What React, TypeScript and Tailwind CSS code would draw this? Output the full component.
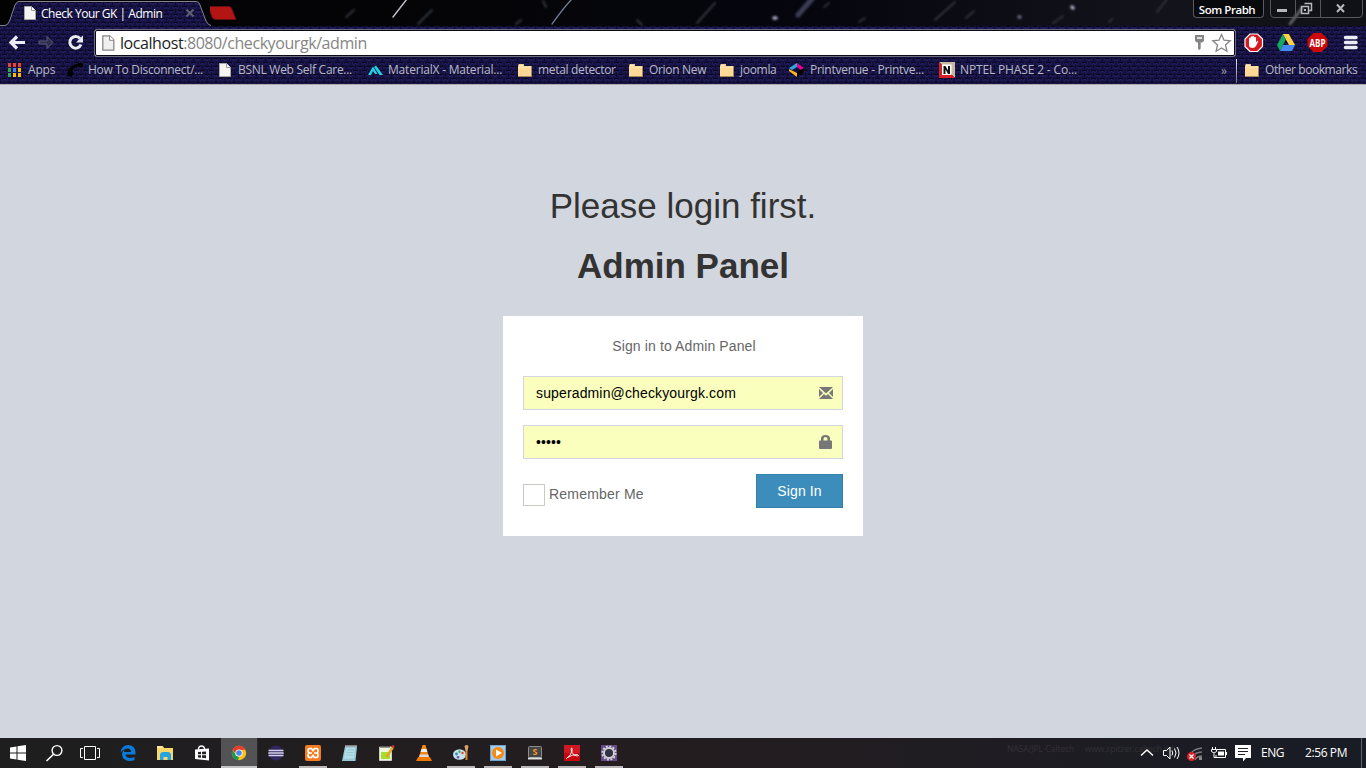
import React from 'react';

const UI = "font-['Open_Sans','Noto_Sans',sans-serif]";

function Weave() {
  return (
    <svg className="absolute inset-0 h-full w-full" aria-hidden="true">
      <defs>
        <pattern id="weave" width="9" height="8" patternUnits="userSpaceOnUse" y="1">
          <rect width="9" height="8" fill="#15113f" />
          <path d="M0 1.5h2M7 1.5h2M2.5 5.5h4" stroke="#090819" strokeWidth="1.1" />
          <path d="M0 3.5l2-1M7 2.5l2 1M2.5 7.5l2-1 2 1" stroke="#29246e" strokeWidth="1" fill="none" />
          <path d="M3 2v2M6 2v2M1.5 5.5v2M7.5 5.5v2" stroke="#1f1a5a" strokeWidth="1" />
          <path d="M4.5 1v3M0 5v2" stroke="#0d0b2b" strokeWidth="1" />
        </pattern>
      </defs>
      <rect width="100%" height="100%" fill="url(#weave)" />
    </svg>
  );
}

function Meteors() {
  return (
    <svg className="absolute inset-0" width="1366" height="26" viewBox="0 0 1366 26" aria-hidden="true">
      <defs>
        <linearGradient id="sky">
          <stop offset="0" stopColor="#020203" />
          <stop offset=".35" stopColor="#050508" />
          <stop offset=".6" stopColor="#05060e" />
          <stop offset=".85" stopColor="#13141b" />
          <stop offset="1" stopColor="#101116" />
        </linearGradient>
        <filter id="soft" x="-5%" y="-50%" width="110%" height="200%">
          <feGaussianBlur stdDeviation="1" />
        </filter>
      </defs>
      <rect width="1366" height="26" fill="url(#sky)" />
      <g strokeLinecap="round" fill="none">
        <path d="M393 17L407-1" stroke="#bdbbc4" strokeWidth="1.500" />
        <path d="M552 24C560 13 565 6 572-1" stroke="#76829a" strokeWidth="1.300" />
      </g>
      <g strokeLinecap="round" fill="none" filter="url(#soft)">
        <path d="M346 17l8-7M418 24l14-14M516 24l5-4M543 1l3 6M697 23l18-20M637 20l5 5" stroke="#33343e" strokeWidth="2" />
        <path d="M798 15L812-1" stroke="#3a3d52" strokeWidth="5" />
        <path d="M824 7l5-4M859 22l6-4M966 18l8-7M1053 23l10-7M935 20l20-18M1109 22l3-3M1157 12l10-13" stroke="#30323c" strokeWidth="2" />
        <path d="M1290 24l12-16" stroke="#6b6e76" strokeWidth="2.500" />
        <path d="M774 18h2M1072 7l1 1" stroke="#a5aac4" strokeWidth="3.500" />
        <path d="M1019 17h1" stroke="#666b80" strokeWidth="3.500" />
      </g>
    </svg>
  );
}

function PageIcon({ className = '' }: { className?: string }) {
  return (
    <svg className={className} width="12" height="14" viewBox="0 0 12 14">
      <path d="M.5.5h7l4 4v9H.5z" fill="#f4f4f4" stroke="#a7a7a7" />
      <path d="M7.500.500v4h4" fill="#fff" stroke="#999" />
    </svg>
  );
}

function Folder() {
  return (
    <svg width="16" height="16" viewBox="0 0 16 16">
      <path d="M1 3.500q0-1.500 1-1.500h5v2h8v10.500H1z" fill="#e0a95c" />
      <path d="M2 2.500h4.500v1.500H2z" fill="#fff3d0" />
      <path d="M1 4.500h13V14H1z" fill="#ffd995" />
      <path d="M1 5h13" stroke="#ffefc4" />
      <path d="M14.500 4.500v10H1" stroke="#a3875c" fill="none" />
    </svg>
  );
}

function AppsIcon() {
  const dots = ['#ea4335', '#ea4335', '#ea4335', '#34a853', '#4285f4', '#fbbc05', '#34a853', '#fbbc05', '#fbbc05'];
  return (
    <svg width="14" height="14" viewBox="0 0 14 14">
      {dots.map((c, i) => (
        <rect key={i} x={(i % 3) * 5} y={Math.floor(i / 3) * 5} width="3" height="4" fill={c} />
      ))}
    </svg>
  );
}

function PhoneIcon() {
  return (
    <svg width="16" height="16" viewBox="0 0 16 16">
      <path d="M1 14q-2-5 3-9 5-4 10-4l2 1-1 4-4-1v-1Q6 6 5 10l2 1-2 4z" fill="#000" />
    </svg>
  );
}

function PrintIcon() {
  return (
    <svg width="16" height="16" viewBox="0 0 16 16">
      <path d="M0 6l8-5v4L3 8z" fill="#29a9e0" />
      <path d="M8 1l7 5-3 2-4-3z" fill="#ec008c" />
      <path d="M0 7l8 4v4L0 9z" fill="#ffb51b" />
      <path d="M8 10l7-4v4l-7 5z" fill="#050505" />
    </svg>
  );
}

const bookmarks: { icon: React.ReactNode; label: string; box: string; text: string }[] = [
  { icon: <AppsIcon />, label: 'Apps', box: 'w-[59px]', text: 'tracking-[-0.2px]' },
  { icon: <PhoneIcon />, label: 'How To Disconnect/...', box: 'w-[152px]', text: 'tracking-[-0.3px] pl-px' },
  { icon: <PageIcon />, label: 'BSNL Web Self Care...', box: 'w-[149px]', text: '-ml-px tracking-[-0.28px]' },
  {
    icon: (
      <svg width="15" height="16" viewBox="0 0 15 16">
        <path d="M0 13L5 4.500 9.500 12H7L5 9l-2 4zM6 5l2-1.500L15 13h-3.500z" fill="#20d0e4" />
      </svg>
    ),
    label: 'MaterialX - Material...',
    box: 'w-[149px]',
    text: 'tracking-[-0.2px]',
  },
  { icon: <Folder />, label: 'metal detector', box: 'w-[111px]', text: 'tracking-[-0.32px] pl-px' },
  { icon: <Folder />, label: 'Orion New', box: 'w-[91px]', text: 'tracking-[-0.32px] pl-px' },
  { icon: <Folder />, label: 'joomla', box: 'w-[70px]', text: 'tracking-[-0.3px] pl-px' },
  { icon: <PrintIcon />, label: 'Printvenue - Printve...', box: 'w-[150px]', text: 'tracking-[-0.27px] pl-px' },
  {
    icon: (
      <svg width="16" height="16" viewBox="0 0 16 16">
        <path d="M0 0h16v16z" fill="#c9b8a1" />
        <path d="M0 0v16h16z" fill="#d51f28" />
        <path d="M3 2.500h9.500v10.500H3z" fill="#fff" />
        <path d="M4.500 12V4h2l2.500 4.500V4h2v8H9L6.500 7.500V12z" fill="#111" />
      </svg>
    ),
    label: 'NPTEL PHASE 2 - Co...',
    box: 'w-[150px]',
    text: 'tracking-[-0.15px] pl-px',
  },
];

function TabStrip() {
  return (
    <div className="relative flex h-[25px] w-full">
      <Meteors />
      <div className="relative h-[26px] w-[210px] shrink-0">
        <svg className="absolute inset-0" width="212" height="26" viewBox="0 0 212 26">
          <path d="M0 26V25.500H5Q8 25 9.500 21L15 5q1.500-3.500 4-3.500h177q3 0 4 3.500l6 16q2 4 5 4.500V26z" fill="url(#weave)" />
          <path d="M0 25.500H5Q8 25 9.500 21L15 5q1.500-3.500 4-3.500h177q3 0 4 3.500l6 16q2 4 5 4.500" fill="none" stroke="#85848f" />
        </svg>
        <div className="relative flex h-[26px] items-center pl-6">
          <PageIcon className="mr-[5px]" />
          <span className="w-[145px] pt-px text-[12px] leading-none tracking-[-0.48px] text-white">Check Your GK | Admin</span>
          <svg width="8" height="8" viewBox="0 0 8 8">
            <path d="M.5.500l7 7M7.500.500l-7 7" stroke="#605f74" strokeWidth="2" />
          </svg>
        </div>
      </div>
      <svg className="relative shrink-0" width="30" height="25" viewBox="0 0 30 25">
        <path d="M0 6.500h21q2 0 3 2.500l4 10.500H8q-3 0-4-2.500z" transform="translate(-2)" fill="#b31414" stroke="#651013" />
      </svg>
      <div className="relative ml-auto mr-[3px] flex">
        <div className="mr-[6px] flex h-[18px] w-[71px] items-center justify-center rounded-b border border-t-0 border-[#595b60] bg-[#08090d] pr-[3px] pt-[2px] text-[11.500px] font-semibold leading-none tracking-[-0.45px] text-white">
          Som Prabh
        </div>
        <svg width="93" height="19" viewBox="0 0 93 19">
          <path d="M.5 0v14q0 3.500 3.500 3.500h85q3.500 0 3.500-3.500V0M25.500 0v17.500M50.500 0v17.500" fill="none" stroke="#55575c" />
          <path d="M7 9h10v3H7z" fill="#b7b8bb" />
          <path d="M34.500 3.500h7v7h-3M31.500 6.500h7v7h-7z" fill="none" stroke="#b7b8bb" strokeWidth="1.500" />
          <path d="M34 9h2v2h-2z" fill="#b7b8bb" />
          <path d="M67 4.500l7 7.500M74 4.500L67 12" stroke="#b7b8bb" strokeWidth="2" />
        </svg>
      </div>
    </div>
  );
}

function Toolbar() {
  return (
    <div className="relative flex h-[32px] items-center">
      <svg className="shrink-0" width="94" height="32" viewBox="0 0 94 32">
        <path d="M25 17.500H12M17 11.500l-6 6 6 6" fill="none" stroke="#ececf6" strokeWidth="3.200" />
        <path d="M39 16h8v-4.500l6 6-6 6V19h-8z" fill="#302e50" stroke="#5b5a76" />
        <path d="M80 13.500A5.800 5.800 0 1 0 81 19.500" fill="none" stroke="#ececf6" strokeWidth="3" />
        <path d="M83 10.500v7h-7z" fill="#ececf6" />
      </svg>
      <div className="mt-[4px] flex h-[28px] w-[1142px] shrink-0 items-center rounded-[3px] border border-[#6e6d7d] bg-white pl-[7px] pr-[2px] outline-1 -outline-offset-2 outline-[#08071c]">
        <svg width="13" height="16" viewBox="0 0 13 16">
          <path d="M.8.8h7l4 4v10.400H.8z" fill="#f0f0f0" stroke="#888" strokeWidth="1.300" />
          <path d="M7.500.800v4.500h4.500" fill="#fff" stroke="#888" />
        </svg>
        <span className="ml-[5px] whitespace-nowrap text-[16px] leading-none tracking-[-0.43px] text-[#858585]">
          <span className="text-[#222]">localhost</span>:8080/checkyourgk/admin
        </span>
        <svg className="ml-auto" width="40" height="22" viewBox="0 0 40 22">
          <path d="M2 3h9v6l-2 1.500H7.700v6L6.500 18H6l-1-1.500v-6H4L2 9z" fill="#858585" />
          <path d="M4 5h5v2H4z" fill="#ddd" />
          <path d="M28.500 2.500l2.500 5.700 6.200.600-4.700 4.200 1.400 6.200-5.400-3.300-5.400 3.300 1.400-6.200-4.700-4.200 6.200-.600z" fill="#fff" stroke="#858585" strokeWidth="1.300" />
        </svg>
      </div>
      <svg className="shrink-0" width="130" height="32" viewBox="1236 0 130 32">
        <path d="M1250 9h7.500l5 5v7.500l-5 5H1250l-5-5V14z" fill="#d81820" stroke="#fff" strokeWidth="1.200" />
        <path d="M1249 17v-3.500q1-1.500 1.500 0v-1.500q1-1.500 1.700 0v-.500q1-1.500 2 0v1q1-1 1.800 0v5l1-1.500q1-.500 1.200.500l-2.200 4.500q-1 2-3.500 2-3.500 0-3.500-3z" fill="#fff" />
        <path d="M1282.800 9h6l6.200 11h-6z" fill="#ffcf48" />
        <path d="M1282.800 9l3 5.500L1280 26l-3-6z" fill="#11a861" />
        <path d="M1283 20h12l-3 6h-12z" fill="#4688f4" />
        <path d="M1313.500 8h8l6 6v7l-6 6h-8l-6-6v-7z" fill="#cc0909" />
        <text x="1317.500" y="21.500" textAnchor="middle" fill="#fff" fontSize="10.500" fontWeight="700" textLength="16" lengthAdjust="spacingAndGlyphs">ABP</text>
        <path d="M1345.500 12.500h10.500M1345.500 17.500h10.500M1345.500 22.500h10.500" stroke="#ececf4" strokeWidth="3.500" strokeLinecap="round" />
      </svg>
    </div>
  );
}

function BookmarkBar() {
  return (
    <div className="relative flex h-[27px] items-center pl-2 text-[12px] leading-none text-[#b9b9c6]">
      {bookmarks.map((b) => (
        <div key={b.label} className={`flex h-[26px] shrink-0 items-center whitespace-nowrap pb-px ${b.box}`}>
          <span className="flex w-5 shrink-0 items-center">{b.icon}</span>
          <span className={b.text}>{b.label}</span>
        </div>
      ))}
      <span className="ml-auto mr-[9px] text-[12px] text-[#9c9caa]">»</span>
      <span className="h-[24px] w-px bg-linear-to-b from-[#e8e8f0] to-[#77768a]" />
      <div className="ml-[7px] flex w-[122px] items-center whitespace-nowrap pb-[2px]">
        <Folder />
        <span className="ml-[5px] tracking-[-0.42px]">Other bookmarks</span>
      </div>
    </div>
  );
}

function LoginPage() {
  return (
    <main className="flex h-[653px] flex-col items-center bg-[#d2d6de] pt-[96px] font-['Liberation_Sans',Arial,sans-serif] text-[14px] leading-5">
      <h1 className="mb-[10px] text-[35px] font-normal leading-[50px] text-[#333]">Please login first.</h1>
      <h2 className="mb-[25px] text-[35px] font-bold leading-[50px] text-[#333]">Admin Panel</h2>
      <section className="h-[220px] w-[360px] bg-white p-5 text-[#666]">
        <p className="pb-5 pl-[2px] text-center tracking-[0.12px]">Sign in to Admin Panel</p>
        <div className="mb-[15px] flex h-[34px] items-center justify-between border border-[#d2d6de] bg-[#faffbd] pl-3 pr-[9px] text-black">
          <span className="tracking-[0.14px]">superadmin@checkyourgk.com</span>
          <svg width="14" height="12" viewBox="0 0 14 12">
            <path d="M0 0h14L7 6.500zM0 2l4 4-4 4zM14 2l-4 4 4 4zM5 7l2 1.800L9 7l5 5H0z" fill="#777" />
          </svg>
        </div>
        <div className="mb-[15px] flex h-[34px] items-center justify-between border border-[#d2d6de] bg-[#faffbd] pl-3 pr-[10px] text-black">
          <span className="tracking-[0.1px]">•••••</span>
          <svg width="13" height="14" viewBox="0 0 13 14">
            <path d="M1 5.500h1V3.500Q2 0 6.500 0T11 3.500v2h1q1 0 1 1V13q0 1-1 1H1q-1 0-1-1V6.500q0-1 1-1zm3.500 0h4V4q0-2-2-2t-2 2z" fill="#777" />
          </svg>
        </div>
        <div className="flex items-start justify-between">
          <label className="mt-[10px] flex items-center">
            <span className="mr-1 h-[22px] w-[22px] border border-[#ccc9c5] bg-white" />
            <span className="-mt-[2px] tracking-[0.2px]">Remember Me</span>
          </label>
          <button className="h-[34px] w-[87px] border border-[#367fa9] bg-[#3c8dbc] tracking-[0.1px] text-white">Sign In</button>
        </div>
      </section>
    </main>
  );
}

function Chrome() {
  return (
    <svg width="16" height="16" viewBox="0 0 16 16">
      <circle cx="8" cy="8" r="7.200" fill="#fbc116" />
      <path d="M1.500 4.800A7.200 7.200 0 0 1 14.500 4.800L8 5 5 9z" fill="#e23c2d" />
      <path d="M1.500 4.800L5 10.500l3 1.500-1 3.100A7.200 7.200 0 0 1 1.500 4.800z" fill="#169c58" />
      <circle cx="8" cy="8" r="3.600" fill="#fff" />
      <circle cx="8" cy="8" r="2.800" fill="#4687ed" />
    </svg>
  );
}

const tasks: { id: string; open?: boolean; active?: boolean; icon: React.ReactNode }[] = [
  { id: 'edge', icon: <path d="M.5 7.500Q1.500 0 8.500 0 15.500.500 15.500 8v1.500H5.500q.5 3.500 5 3.500 2 0 4-1v3q-2 1-5 1-7 0-7.500-6.500Q2 6 5.500 4.200 4 5.500 4 7h7q0-3.500-3.500-3.500T.5 7.500z" fill="#0b7ad9" /> },
  { id: 'explorer', icon: <><path d="M0 1h6l1 2h9v12H0z" fill="#f9d66b" /><path d="M0 1h5v2H0z" fill="#ffe9a2" /><path d="M3 15V9l2-2h7l2 2v6h-3.500v-3h-4v3z" fill="#24a5df" /></> },
  { id: 'store', icon: <><path d="M4.500 5V3.500q.5-2.500 3-2.500t3 2.500V5" fill="none" stroke="#fff" strokeWidth="1.300" /><path d="M1 4.500l14-1v12L1 14z" fill="#fff" /><path d="M4 7l3-.200V9.300H4zm4-.300l4-.300v2.900H8zM4 10.200h3v2.500l-3-.300zm4 0h4v3l-4-.400z" fill="#222" /></> },
  { id: 'chrome', active: true, icon: <Chrome /> },
  { id: 'eclipse', icon: <><circle cx="8" cy="8" r="7.500" fill="#302761" /><path d="M.5 5.500h15M.3 8h15.400M.5 10.500h15" stroke="#d5d4ea" strokeWidth="1.300" /></> },
  { id: 'xampp', open: true, icon: <><rect width="16" height="16" rx="2" fill="#f47c20" /><path d="M7 8H5q-2 0-2-2.200T5 3.500h1.500L8 5.500l1.500-2H11q2 0 2 2.300T11 8H9M7 8H5q-2 0-2 2.200t2 2.300h1.500L8 10.500l1.500 2H11q2 0 2-2.300T11 8H9" fill="none" stroke="#fff" strokeWidth="1.700" /></> },
  { id: 'notepad', icon: <><path d="M3 1.500h12L13.500 16H0z" fill="#9ac9d6" /><path d="M4 3h9l-1 10.500H2z" fill="#b5dde6" /><path d="M5 5h7M4.500 7.500h7M4 10h7" stroke="#94c9d5" /><path d="M3.500 1h11" stroke="#e1e1e1" strokeWidth="2" strokeDasharray="1 1" /></> },
  { id: 'notepadpp', icon: <><path d="M.5 2h12v13.500H.5z" fill="#eef6dc" stroke="#ccc" /><path d="M2 7h9v7H2z" fill="#a7dc30" /><path d="M1.500 2h10" stroke="#444" strokeWidth="2" strokeDasharray="1 1" /><path d="M7.500 12L14 2" stroke="#e3a527" strokeWidth="2.500" /><path d="M13 2l2-1.500" stroke="#c92a25" strokeWidth="2.500" /></> },
  { id: 'vlc', icon: <><path d="M6.500 0h3L13 12H3z" fill="#f28516" /><path d="M5.500 4h5l.800 3H4.700z" fill="#eee" /><path d="M3.800 9.500h8.400l.600 2.500H3.200z" fill="#ddd" /><path d="M2 12h12l2 4H0z" fill="#ef7900" /></> },
  { id: 'paint', open: true, icon: <><ellipse cx="6.500" cy="9.500" rx="6.500" ry="5.300" fill="#c4e2ef" /><circle cx="3.500" cy="9" r="1.400" fill="#2f89bd" /><circle cx="6.500" cy="6.700" r="1.200" fill="#4da845" /><circle cx="9.500" cy="8" r="1.200" fill="#e54832" /><circle cx="5" cy="12.200" r="1.300" fill="#704c9d" /><path d="M13.500 6v9" stroke="#d88428" strokeWidth="2" /><path d="M11.500 1q2-2 4 0l-1 5h-2z" fill="#d6a267" /></> },
  { id: 'player', open: true, icon: <><rect x=".5" y=".5" width="15" height="15" fill="#a7cbe6" stroke="#6ba6d2" /><circle cx="8" cy="8" r="6" fill="#f58a14" /><path d="M6 4.500l6 3.500-6 3.500z" fill="#fff" /></> },
  { id: 'sublime', open: true, icon: <><rect x="1.500" y="1.500" width="13" height="11" rx="1" fill="#454545" stroke="#8c8c8c" /><path d="M1 12.500h14v2H1z" fill="#ddd" /><text x="8" y="10" textAnchor="middle" fill="#f29b27" fontSize="9" fontWeight="700">S</text></> },
  { id: 'pdf', open: true, icon: <><path d="M0 0h16v16H0z" fill="#c5080f" /><path d="M0 0h16v8H0z" fill="#d01820" /><path d="M2.500 13.500Q7 10.500 8 6 8.500 2.500 7.500 3T8 7.500q2 3.500 5 3.500t.5-1.500Q8 9.500 3.500 12.500z" fill="none" stroke="#fff" strokeWidth=".9" /></> },
  { id: 'gear', open: true, icon: <><path d="M0 0h16v16H0z" fill="#644b86" /><circle cx="8" cy="8" r="6.600" fill="none" stroke="#d2d1d5" strokeWidth="2" strokeDasharray="2 1.460" /><circle cx="8" cy="8" r="5" fill="#343044" stroke="#cfced2" strokeWidth="2" /></> },
];

function Taskbar() {
  return (
    <footer className="flex h-[30px] items-stretch bg-linear-to-r from-[#1e1e1f] via-[#241d20] to-[#181c25] text-white">
      <svg className="shrink-0" width="109" height="30" viewBox="0 0 109 30">
        <path d="M10 9.500L16.500 8.500V14.500H10zM17.500 8.300L26 7V14.500H17.500zM10 15.500h6.500v6L10 20.500zM17.500 15.500H26V23L17.500 21.700z" fill="#fff" />
        <circle cx="57" cy="12.500" r="4.900" fill="none" stroke="#fff" strokeWidth="1.400" />
        <path d="M53.500 16.200L46.500 23" stroke="#fff" strokeWidth="1.600" />
        <path d="M84.500 8.500h11v13h-11zM83 10.500h-2.500v9H83M97 10.500h2.500v9H97" fill="none" stroke="#fff" />
      </svg>
      {tasks.map((t) => (
        <div key={t.id} className={`flex w-[37px] shrink-0 flex-col items-center ${t.active ? 'translate-x-px border-r border-[#2a282a] bg-[#535254]' : ''}`}>
          <svg className="mt-[7px]" width="16" height="16" viewBox="0 0 16 16">{t.icon}</svg>
          {t.open && <span className="mt-auto h-[2px] w-7 bg-[#b9b7b8]" />}
          {t.active && <span className="mt-auto h-[2px] w-full bg-[#c5c4c5]" />}
        </div>
      ))}
      <div className="ml-auto flex items-center whitespace-nowrap">
        <span className="-mr-[46px] mt-[-8px] w-[179px] text-[8.500px] tracking-[-0.1px] text-[#343135]">NASA/JPL-Caltech &nbsp; &nbsp; www.spitzer.caltech.edu</span>
        <svg className="shrink-0" width="114" height="30" viewBox="1140 0 114 30">
          <path d="M1141 17.500l6-5.500 6 5.500" fill="none" stroke="#fff" strokeWidth="1.400" />
          <path d="M1163.500 12.500h3l3.500-3.500v12l-3.500-3.500h-3z" fill="none" stroke="#fff" />
          <path d="M1172 12.500q1.500 2.500 0 5M1174.500 10.500q3 4.500 0 9M1177 9q4 6 0 12" fill="none" stroke="#fff" />
          <path d="M1188 20q3-9 14-10M1191 21q3-7 11-7M1195 22q2-4 7-4" fill="none" stroke="#77797d" strokeWidth="1.400" />
          <path d="M1199 19h3v3h-3z" fill="#888" />
          <circle cx="1191.500" cy="18.500" r="4.500" fill="#d9232c" />
          <path d="M1189.500 16.500l4 4M1193.500 16.500l-4 4" stroke="#fff" strokeWidth="1.200" />
          <path d="M1216.500 11.500h9v8h-9.500V17M1226.500 14v3M1212.500 9v2.500M1215.500 9v2.500M1211.500 11.500h5v2q-2.500 3-5 0zM1214 15.500v4h3" fill="none" stroke="#fff" />
          <path d="M1218 13.500h6v4h-6z" fill="#fff" />
          <path d="M1235 7h16v13h-5l-3 3.500V20h-8z" fill="#fff" />
          <path d="M1238 10.500h10M1238 13.500h10M1238 16.500h7" stroke="#202026" />
        </svg>
        <span className="ml-[7px] w-[44px] text-[12px] leading-none tracking-[-0.5px]">ENG</span>
        <span className="w-[56px] text-[12px] leading-none tracking-[-0.4px]">2:56 PM</span>
        <span className="h-full w-px bg-[#606268]" />
        <span className="w-1" />
      </div>
    </footer>
  );
}

export default function App() {
  return (
    <div className="h-[774px] w-[1366px] overflow-hidden bg-white">
      <div className={`relative h-[85px] border-b border-[#aaa9ad] bg-[#15113f] ${UI}`}>
        <Weave />
        <TabStrip />
        <Toolbar />
        <BookmarkBar />
      </div>
      <LoginPage />
      <div className={UI}>
        <Taskbar />
      </div>
    </div>
  );
}
